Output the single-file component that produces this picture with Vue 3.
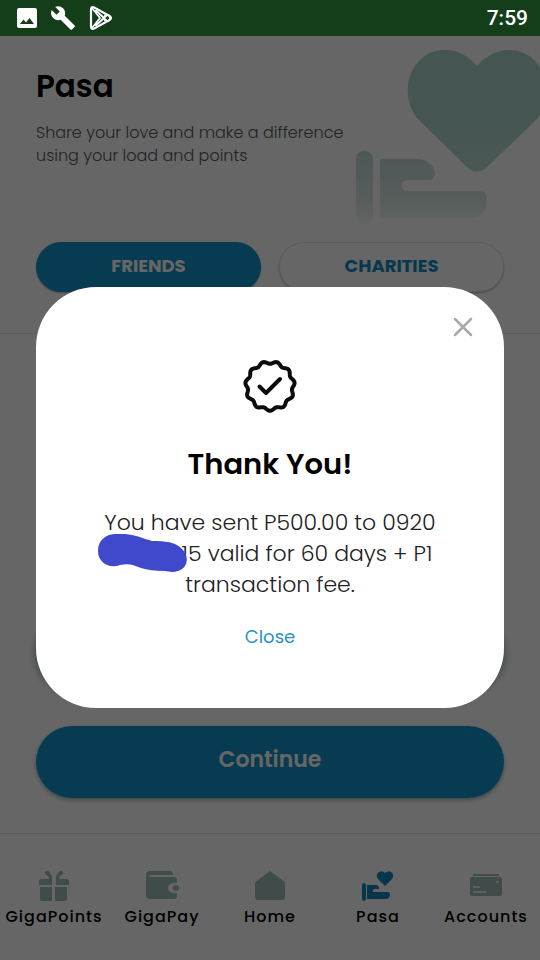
<script setup>
import { ref } from 'vue'

const open = ref(true)
const tab = ref('FRIENDS')
const tabs = ['FRIENDS', 'CHARITIES']
const items = ['GigaPoints', 'GigaPay', 'Home', 'Pasa', 'Accounts']

// Wavy outline of the seal: eleven lobes around the centre of a 56 x 56 box.
const seal = Array.from({ length: 180 }, (_, i) => {
  const angle = (i / 180) * Math.PI * 2
  const radius = 23.5 - 1.3 * Math.cos(angle * 11)
  return `${28 + radius * Math.sin(angle)},${28 - radius * Math.cos(angle)}`
}).join(' ')
</script>

<template>
  <div class="app">
    <header class="status">
      <div class="status-icons">
        <svg width="20" height="20" viewBox="0 0 20 20">
          <path fill="#fff" fill-rule="evenodd" d="M2 0h16a2 2 0 0 1 2 2v16a2 2 0 0 1-2 2H2a2 2 0 0 1-2-2V2a2 2 0 0 1 2-2zM3 16h14l-4.500-6-3.500 4.500-2.500-3z" />
        </svg>
        <svg width="26" height="26" viewBox="0 0 24 24">
          <path fill="#fff" d="M22.700 19l-9.100-9.100c.9-2.300.4-5-1.500-6.900-2-2-5-2.400-7.400-1.300L9 6 6 9 1.600 4.700C.4 7.100.9 10.100 2.900 12.100c1.900 1.900 4.600 2.400 6.900 1.500l9.100 9.100c.4.400 1 .4 1.400 0l2.300-2.300c.5-.4.5-1.100.1-1.400z" />
        </svg>
        <svg width="24" height="26" viewBox="0 0 24 26" fill="none" stroke="#fff" stroke-width="2.200" stroke-linejoin="round" stroke-linecap="round">
          <path d="M2 4.500C2 2.200 3.500 1.500 5.500 2.600L20.500 11Q23.500 13 20.500 15L5.500 23.400C3.500 24.500 2 23.800 2 21.500z" />
          <path d="M3 3l8 10-8 10M7 5.500L17 15M7 20.500L17 11" stroke-width="1.800" />
          <circle cx="18" cy="13" r="3" stroke-width="1.500" />
        </svg>
      </div>
      <time>7:59</time>
    </header>

    <div class="screen">
      <main class="page">
        <section class="hero">
          <div class="intro">
            <h1>Pasa</h1>
            <p>Share your love and make a difference using your load and points</p>
          </div>
          <svg class="art" width="184" height="190" viewBox="0 0 184 190">
            <defs>
              <linearGradient id="heart" x1="0" y1="0" x2="0" y2="1">
                <stop offset="0" stop-color="#acd5cd" />
                <stop offset=".6" stop-color="#acd5cd" />
                <stop offset="1" stop-color="#bcdbd5" />
              </linearGradient>
              <linearGradient id="hand" gradientUnits="userSpaceOnUse" x1="0" y1="114" x2="0" y2="188">
                <stop offset="0" stop-color="#bfdcd7" />
                <stop offset=".6" stop-color="#d8e6e4" />
                <stop offset="1" stop-color="#f4f8f7" />
              </linearGradient>
            </defs>
            <path fill="url(#heart)" d="M121 30C104 10 79 9 64 24 48 39 48 67 62 83L113 133Q121 138 129 133L181 83C195 66 193 38 178 24 163 9 137 11 121 30z" />
            <g fill="url(#hand)">
              <rect x="0" y="115" width="17" height="73" rx="8" />
              <path d="M26 123H62C71 123 79 130 79 137Q79 144 73 144H53Q46 145 46 149 46 155 52 155H124Q131 156 131 162C131 173 126 182 116 182H26Q24 182 24 180V125Q24 123 26 123z" />
            </g>
          </svg>
        </section>

        <div class="tabs">
          <button v-for="t in tabs" :key="t" type="button" class="tab" :class="{ active: tab === t }" @click="tab = t">{{ t }}</button>
        </div>

        <section class="form">
          <div class="field"></div>
          <button type="button" class="continue">Continue</button>
        </section>
      </main>

      <nav class="nav">
        <a v-for="item in items" :key="item" href="#" class="nav-item">
          <svg v-if="item === 'GigaPoints'" width="32" height="32" viewBox="0 0 32 32" fill="#9dbfb8">
            <path d="M8 1q2-1 4 2 2 2 2 6h-3q0-3-4-5-1-2 1-3zM24 1q-2-1-4 2-2 2-2 6h3q0-3 4-5 1-2-1-3zM3 9h11v6H1v-4q0-2 2-2zM18 9h11q2 0 2 2v4H18zM2 17h12v14H4q-2 0-2-2zM17 17h12v12q0 2-2 2H17z" />
          </svg>
          <svg v-else-if="item === 'GigaPay'" width="36" height="32" viewBox="0 0 36 32" fill="#9dbfb8">
            <path d="M6 1h20q3 0 3 4H7q-2 0-2 1t2 1h23q3 0 3 3v3h-4q-5 1-5 5t5 5h4v3q0 3-3 3H6q-4 0-4-4V5q0-4 4-4z" />
            <circle cx="32" cy="18" r="3" />
          </svg>
          <svg v-else-if="item === 'Home'" width="32" height="32" viewBox="0 0 32 32" fill="#9dbfb8">
            <path d="M16 1l12 9q3 1 3 4v13q0 3-3 3H4q-3 0-3-3V14q0-3 3-4z" />
          </svg>
          <svg v-else-if="item === 'Pasa'" width="34" height="32" viewBox="0 0 34 32" fill="#1687bb">
            <rect x="1" y="13" width="4" height="18" rx="2" />
            <path d="M6 15h9q3 0 3 4h-5q-2 1-1 3h15q2 0 2 2 0 5-4 5H6z" />
            <path d="M24 3q-3-3-6-1-4 3-1 7l7 7 7-7q3-4-1-7-3-2-6 1z" />
          </svg>
          <svg v-else width="34" height="32" viewBox="0 0 34 32">
            <path fill="#9dbfb8" d="M4 4h26v2H4zM3 7h28q2 0 2 2v15q0 2-2 2H3q-2 0-2-2V9q0-2 2-2z" />
            <path fill="#e8f1ef" d="M4 16h7v2H4zM4 21h13v2H4zM27 11h3v2h-3z" />
          </svg>
          <span>{{ item }}</span>
        </a>
      </nav>

      <div v-if="open" class="overlay">
        <div class="modal" role="dialog" aria-modal="true" aria-labelledby="thanks">
          <button type="button" class="dismiss" @click="open = false">
            <svg width="20" height="20" viewBox="0 0 20 20" stroke="#a9a9a9" stroke-width="2.500" stroke-linecap="round">
              <path d="M2 2l16 16M18 2L2 18" />
            </svg>
          </button>
          <svg width="56" height="56" viewBox="0 0 56 56" fill="none" stroke="#0b0b0b" stroke-width="4" stroke-linejoin="round" stroke-linecap="round">
            <polygon :points="seal" />
            <path d="M17.500 28.500l6.500 6.500 14-14" />
          </svg>
          <h2 id="thanks">Thank You!</h2>
          <p class="message">
            You have sent P500.00 to 0920
            <span class="redacted"><svg class="scribble" width="90" height="38" viewBox="0 0 90 38">
              <path fill="#4048cc" d="M0 17C0 6 8 0 18 0 34-1 40 3 54 7 68 7 77 8 83 14 92 22 90 34 80 37 74 39 70 37 67 37 57 37 49 36 43 34 35 31 31 29 22 31 12 35 0 29 0 17z" />
            </svg></span>15 valid for 60 days + P1 transaction fee.
          </p>
          <button type="button" class="close" @click="open = false">Close</button>
        </div>
      </div>
    </div>
  </div>
</template>

<style>
body {
  margin: 0;
}
</style>

<style scoped>
.app {
  display: flex;
  flex-direction: column;
  min-height: 100vh;
  background: #fff;
  color: #000;
  font-family: Poppins, Inter, "Noto Sans", sans-serif;
}

button {
  border: 0;
  padding: 0;
  background: none;
  font-family: inherit;
  cursor: pointer;
}

svg {
  display: block;
}

h1,
h2,
p {
  margin: 0;
}

.status {
  display: flex;
  align-items: center;
  justify-content: space-between;
  height: 36px;
  padding: 0 12px 0 17px;
  background: #143d1a;
  color: #fff;
  font: 500 21px Roboto, sans-serif;
}

.status-icons {
  display: flex;
  align-items: center;
  gap: 13px;
}

.screen {
  position: relative;
  flex: 1;
  display: flex;
  flex-direction: column;
}

.page {
  flex: 1;
  display: flex;
  flex-direction: column;
}

.hero {
  display: flex;
  justify-content: space-between;
  height: 206px;
  padding-left: 36px;
}

.intro {
  flex: 1;
  padding-top: 28px;
}

.intro h1 {
  font-size: 31px;
  font-weight: 600;
  line-height: 44px;
}

.intro p {
  margin-top: 13px;
  font-size: 16px;
  font-weight: 300;
  line-height: 23px;
  color: #505a5a;
}

.art {
  flex: none;
}

.tabs {
  display: grid;
  grid-template-columns: 1fr 1fr;
  gap: 18px;
  padding: 0 36px 41px;
  border-bottom: 1px solid #e6eceb;
}

.tab {
  height: 50px;
  padding-bottom: 4px;
  border: 1px solid #e0e8e7;
  border-radius: 25px;
  box-shadow: 0 1px 2px #a9bfbc;
  color: #128bc4;
  background: #fff;
  font-size: 18px;
  font-weight: 700;
}

.tab.active {
  border-color: #1393ca;
  background: #1393ca;
  color: #fff;
}

.form {
  flex: 1;
  display: flex;
  flex-direction: column;
  justify-content: flex-end;
  gap: 38px;
  padding: 0 36px 35px;
}

.field {
  height: 72px;
  border-radius: 36px;
  background: #fff;
  box-shadow: 0 2px 8px #7f9592;
}

.continue {
  height: 72px;
  padding-bottom: 6px;
  border-radius: 36px;
  background: #1393ca;
  box-shadow: 0 2px 4px #9ab5b2;
  color: #fff;
  font-size: 22px;
  font-weight: 600;
}

.nav {
  display: grid;
  grid-template-columns: repeat(5, 1fr);
  height: 126px;
  border-top: 1px solid #e0e6e5;
}

.nav-item {
  display: flex;
  flex-direction: column;
  align-items: center;
  gap: 4px;
  padding-top: 36px;
  color: #000;
  font-size: 16px;
  font-weight: 500;
  letter-spacing: 1px;
  line-height: 22px;
  text-decoration: none;
}

.overlay {
  position: absolute;
  inset: 0;
  display: flex;
  align-items: center;
  justify-content: center;
  padding: 0 36px 2px;
  background: rgba(0, 0, 0, 0.6);
}

.modal {
  position: relative;
  flex: 1;
  display: flex;
  flex-direction: column;
  align-items: center;
  padding: 71px 60px 57px;
  border-radius: 60px;
  background: #fff;
}

.dismiss {
  position: absolute;
  top: 30px;
  right: 31px;
}

.modal h2 {
  margin-top: 28px;
  font-size: 29px;
  font-weight: 600;
  line-height: 44px;
}

.message {
  margin-top: 21px;
  font-size: 22px;
  font-weight: 300;
  line-height: 31px;
  text-align: center;
  color: #222;
}

.redacted {
  position: relative;
  display: inline-block;
  width: 74px;
  height: 16px;
}

.scribble {
  position: absolute;
  top: -11px;
  left: -10px;
}

.close {
  margin-top: 23px;
  color: #2a93c8;
  font-size: 18px;
  line-height: 28px;
}
</style>
